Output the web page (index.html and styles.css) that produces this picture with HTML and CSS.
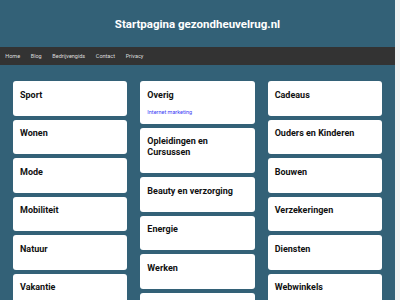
FILE: index.html
```html
<!DOCTYPE html>
<html>
<head>
    <title>Startpagina gezondheuvelrug.nl</title>
    <link rel="stylesheet" href="styles.css">
</head>
<body>
    <div class="page">
        <div class="header">
            <h1>Startpagina gezondheuvelrug.nl</h1>
        </div>
        <div class="nav">
            <a href="#" class="nav-link">Home</a>
            <a href="#" class="nav-link">Blog</a>
            <a href="#" class="nav-link">Bedrijvengids</a>
            <a href="#" class="nav-link">Contact</a>
            <a href="#" class="nav-link">Privacy</a>
        </div>

        <div class="content">
            <div class="column">
                <div class="card"><h3>Sport</h3></div>
                <div class="card"><h3>Wonen</h3></div>
                <div class="card"><h3>Mode</h3></div>
                <div class="card"><h3>Mobiliteit</h3></div>
                <div class="card"><h3>Natuur</h3></div>
                <div class="card"><h3>Vakantie</h3></div>
                <div class="card"><h3>Financieel</h3></div>
            </div>
            <div class="column">
                <div class="card">
                    <h3>Overig</h3>
                    <ul class="links">
                        <li><a href="#">Internet marketing</a></li>
                    </ul>
                </div>
                <div class="card"><h3>Opleidingen en Cursussen</h3></div>
                <div class="card"><h3>Beauty en verzorging</h3></div>
                <div class="card"><h3>Energie</h3></div>
                <div class="card"><h3>Werken</h3></div>
                <div class="card"><h3>Gezondheid</h3></div>
            </div>
            <div class="column">
                <div class="card"><h3>Cadeaus</h3></div>
                <div class="card"><h3>Ouders en Kinderen</h3></div>
                <div class="card"><h3>Bouwen</h3></div>
                <div class="card"><h3>Verzekeringen</h3></div>
                <div class="card"><h3>Diensten</h3></div>
                <div class="card"><h3>Webwinkels</h3></div>
                <div class="card"><h3>Eten en Drinken</h3></div>
            </div>
        </div>
    </div>
</body>
</html>
```

FILE: styles.css
```css
body {
    font-family: Roboto, "Liberation Sans", Arial, sans-serif;
    margin: 0;
    padding: 0;
    background-color: #f1f1f1; /* shows as the thin scrollbar strip */
}
.page {
    margin-right: 5px;
    background-color: #336177;
}
.header {
    height: 47px;
    display: flex;
    align-items: center;
    justify-content: center;
}
.header h1 {
    margin: 0;
    color: #fff;
    font-size: 11.5px;
    font-weight: bold;
}
.nav {
    display: flex;
    align-items: center;
    height: 18px;
    padding-left: 0;
    background-color: #333;
}
.nav-link {
    padding: 0 5.3px;
    color: #ddd;
    font-size: 5.5px;
    text-decoration: none;
}
.nav-link:hover {
    color: #fff;
}
.content {
    display: grid;
    grid-template-columns: 1fr 1fr 1fr;
    gap: 13px;
    padding: 16px 13px;
}
.column {
    display: flex;
    flex-direction: column;
    gap: 4px;
}
.card {
    background-color: #fff;
    border-radius: 3px;
    padding: 8.5px 7px 8px;
}
.card h3 {
    margin: 0 0 7px;
    font-size: 9px;
    line-height: 11px;
    color: #111;
}
.links {
    list-style: none;
    margin: 0;
    padding: 0;
}
.links a {
    display: block;
    font-size: 5.5px;
    line-height: 8px;
    color: #3b3bf5;
    text-decoration: none;
}
```
